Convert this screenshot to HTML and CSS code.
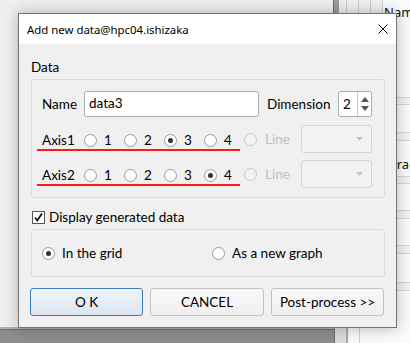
FILE: index.html
```html
<!DOCTYPE html>
<html>
<head>
<meta charset="utf-8">
<link rel="stylesheet" href="styles.css">
</head>
<body>
<div class="app-main">
  <div class="app-bar"></div>
  <div class="app-cols"><span></span><span></span><span></span></div>
</div>
<div class="app-table">
  <div class="tcell thead">Name</div>
  <div class="tcell band"></div>
  <div class="tcell r28"></div>
  <div class="tcell band b8"></div>
  <div class="tcell r36">Fraction</div>
  <div class="tcell band"></div>
  <div class="tcell r27"></div>
  <div class="tcell band b8"></div>
  <div class="tcell r27"></div>
  <div class="tcell band b8"></div>
  <div class="tcell r29"></div>
  <div class="tcell band b8"></div>
</div>
<div class="app-bottom">
  <div class="ab-gray"></div>
  <div class="ab-gap"></div>
  <div class="ab-white"></div>
</div>

<div class="dialog">
  <div class="titlebar">
    <span class="title">Add new data@hpc04.ishizaka</span>
    <svg class="close" width="10" height="10" viewBox="0 0 10 10"><path d="M0.5 0.5 L9.5 9.5 M9.5 0.5 L0.5 9.5" stroke="#000" stroke-width="1" fill="none"/></svg>
  </div>
  <div class="body">
    <div class="section-label">Data</div>
    <div class="group group-data">
      <div class="row row-name">
        <span class="lbl lbl-name">Name</span>
        <div class="input">data3</div>
        <span class="lbl lbl-dim">Dimension</span>
        <div class="spin">
          <span class="spin-val">2</span>
          <div class="spin-btns">
            <svg width="8" height="5" viewBox="0 0 8 5"><path d="M0 5 L4 0 L8 5 Z" fill="#555"/></svg>
            <svg width="8" height="5" viewBox="0 0 8 5"><path d="M0 0 L4 5 L8 0 Z" fill="#555"/></svg>
          </div>
        </div>
      </div>
      <div class="row row-axis">
        <div class="axis-mark">
          <span class="lbl lbl-axis">Axis1</span>
          <span class="radio"><span class="circle"></span>1</span>
          <span class="radio"><span class="circle"></span>2</span>
          <span class="radio"><span class="circle on"></span>3</span>
          <span class="radio"><span class="circle"></span>4</span>
        </div>
        <span class="radio radio-line disabled"><span class="circle"></span>Line</span>
        <div class="combo"><svg width="7" height="4" viewBox="0 0 7 4"><path d="M0 0 L3.5 4 L7 0 Z" fill="#c4c4c4"/></svg></div>
      </div>
      <div class="row row-axis">
        <div class="axis-mark">
          <span class="lbl lbl-axis">Axis2</span>
          <span class="radio"><span class="circle"></span>1</span>
          <span class="radio"><span class="circle"></span>2</span>
          <span class="radio"><span class="circle"></span>3</span>
          <span class="radio"><span class="circle on"></span>4</span>
        </div>
        <span class="radio radio-line disabled"><span class="circle"></span>Line</span>
        <div class="combo"><svg width="7" height="4" viewBox="0 0 7 4"><path d="M0 0 L3.5 4 L7 0 Z" fill="#c4c4c4"/></svg></div>
      </div>
    </div>
    <div class="check-row">
      <span class="check"><svg width="11" height="11" viewBox="0 0 11 11"><path d="M2 5.5 L4.3 8.5 L9 1.5" stroke="#111" stroke-width="1.8" fill="none"/></svg></span>
      <span>Display generated data</span>
    </div>
    <div class="group group-show">
      <span class="radio radio-grid"><span class="circle on"></span>In the grid</span>
      <span class="radio"><span class="circle"></span>As a new graph</span>
    </div>
    <div class="buttons">
      <div class="btn btn-default">O K</div>
      <div class="btn btn-cancel">CANCEL</div>
      <div class="btn">Post-process &gt;&gt;</div>
    </div>
  </div>
</div>
</body>
</html>
```

FILE: styles.css
```css
html, body {
  margin: 0;
  padding: 0;
}
body {
  width: 410px;
  height: 343px;
  overflow: hidden;
  position: relative;
  background: #efefef;
  font-family: "Lato", "Liberation Sans", sans-serif;
  font-size: 13.5px;
  color: #000;
}

/* underlying application (desktop canvas) */
.app-main {
  position: absolute;
  left: 333px;
  top: 0;
  width: 50px;
  height: 13px;
  display: flex;
  background: #f0f0f0;
}
.app-bar {
  width: 5px;
  background: #9c9c9c;
  border-left: 1px solid #6e6e6e;
}
.app-cols {
  display: flex;
  margin-left: 7px;
}
.app-cols span {
  width: 11px;
  border-left: 1px solid #c9c9c9;
}
.app-table {
  position: absolute;
  left: 382px;
  top: 0;
  width: 28px;
  height: 327px;
  background: #fbfbfb;
  border-left: 1px solid #cfcfcf;
  display: flex;
  flex-direction: column;
  overflow: hidden;
}
.tcell {
  flex-shrink: 0;
  border-bottom: 1px solid #d6d6d6;
  padding-left: 7px;
  white-space: nowrap;
  overflow: hidden;
  font-family: "Noto Sans", sans-serif;
  font-size: 13px;
  color: #111;
  box-sizing: border-box;
}
.thead {
  height: 98px;
  padding-left: 1px;
  line-height: 24px;
}
.band { height: 7px; background: #f3f3f3; }
.b8 { height: 8px; }
.r28 { height: 28px; }
.r36 { height: 36px; padding-top: 14px; line-height: 18px; }
.r27 { height: 27px; }
.r29 { height: 29px; }
.app-bottom {
  position: absolute;
  left: 0;
  top: 327px;
  width: 410px;
  height: 16px;
  display: flex;
}
.ab-gray {
  width: 334px;
  background: #8d8d8d;
  border-top: 2px solid #b0b0b0;
  border-right: 1px solid #6a6a6a;
  box-shadow: inset 0 1px 0 #707070;
}
.ab-gap {
  width: 11px;
  background: #dcdcdc;
  border-right: 2px solid #a9a9a9;
}
.ab-white {
  flex: 1;
  background: #fafafa;
  border-left: 1px solid #f0f0f0;
  background-image: linear-gradient(#cfcfcf, #cfcfcf);
  background-size: 1px 100%;
  background-position: 10px 0;
  background-repeat: no-repeat;
}

/* dialog window */
.dialog {
  position: absolute;
  left: 18px;
  top: 13px;
  width: 377px;
  height: 313px;
  border: 1px solid #737373;
  background: #f0f0f0;
  box-shadow: 0 0 14px rgba(0, 0, 0, 0.28);
  display: flex;
  flex-direction: column;
}
.titlebar {
  height: 30px;
  background: #ffffff;
  display: flex;
  align-items: center;
  justify-content: space-between;
  padding: 0 8px 0 8px;
  flex-shrink: 0;
}
.title {
  font-family: "Noto Sans", sans-serif;
  font-size: 11.4px;
  color: #000;
  padding-top: 1px;
}
.close {
  display: block;
  margin-top: -1px;
}
.body {
  flex: 1;
  padding: 14px 11px 0 11px;
  display: flex;
  flex-direction: column;
}
.section-label {
  height: 18px;
  line-height: 18px;
  margin-left: 1px;
  margin-bottom: 3px;
}
.group {
  margin-left: 1px;
  border: 1px solid #dadada;
  border-radius: 3px;
}
.group-data {
  padding: 11px 12px 9px 10px;
  display: flex;
  flex-direction: column;
  gap: 7px;
}
.row {
  display: flex;
  align-items: center;
}
.row-name {
  height: 26px;
  margin-bottom: 1px;
}
.row-axis {
  height: 28px;
}
.lbl {
  line-height: 18px;
}
.lbl-name {
  width: 42px;
}
.input {
  width: 175px;
  height: 26px;
  box-sizing: border-box;
  background: #fff;
  border: 1px solid #adadad;
  border-radius: 3px;
  padding-left: 4px;
  line-height: 23px;
}
.lbl-dim {
  margin-left: 8px;
  width: 71px;
}
.spin {
  width: 34px;
  height: 26px;
  box-sizing: border-box;
  background: #fff;
  border: 1px solid #adadad;
  border-radius: 3px;
  display: flex;
}
.spin-val {
  width: 19px;
  padding-left: 4px;
  box-sizing: border-box;
  line-height: 24px;
  border-right: 1px solid #c8c8c8;
}
.spin-btns {
  flex: 1;
  display: flex;
  flex-direction: column;
  justify-content: space-between;
  align-items: center;
  padding: 5px 0 5px 0;
}
.spin-btns svg { display: block; }

.axis-mark {
  display: flex;
  align-items: center;
  height: 20px;
  margin-left: -5px;
  padding-left: 5px;
  position: relative;
  margin-top: 2px;
}
.axis-mark::after {
  content: "";
  position: absolute;
  left: 0;
  right: 4px;
  bottom: -1px;
  height: 2px;
  background: #ff1a1a;
}
.lbl-axis {
  width: 42px;
}
.radio {
  display: flex;
  align-items: center;
  gap: 7px;
  width: 40px;
  line-height: 18px;
}
.circle {
  width: 13px;
  height: 13px;
  box-sizing: border-box;
  border: 1px solid #9a9a9a;
  border-radius: 50%;
  background: #fff;
  position: relative;
  flex-shrink: 0;
}
.circle.on::after {
  content: "";
  position: absolute;
  left: 3px;
  top: 3px;
  width: 5px;
  height: 5px;
  border-radius: 50%;
  background: #333;
}
.radio-line {
  width: 57px;
  gap: 8px;
}
.disabled { color: #c0c0c0; }
.disabled .circle {
  border-color: #c6c6c6;
  background: #f3f3f3;
}
.combo {
  width: 71px;
  height: 28px;
  box-sizing: border-box;
  border: 1px solid #d4d4d4;
  border-radius: 3px;
  background: #f2f2f2;
  display: flex;
  align-items: center;
  justify-content: flex-end;
  padding-right: 8px;
}
.combo svg { display: block; }

.check-row {
  height: 18px;
  margin-top: 10px;
  margin-bottom: 3px;
  display: flex;
  align-items: center;
  gap: 4px;
  padding-left: 2px;
}
.check {
  width: 13px;
  height: 13px;
  box-sizing: border-box;
  border: 1px solid #555;
  background: #fff;
  display: flex;
  align-items: center;
  justify-content: center;
}
.check svg { display: block; }
.group-show {
  height: 46px;
  display: flex;
  align-items: center;
  padding-left: 10px;
}
.group-show .radio {
  width: auto;
}
.radio-grid {
  width: 170px !important;
}
.buttons {
  margin-top: 11px;
  display: flex;
  gap: 7px;
}
.btn {
  width: 113px;
  height: 28px;
  box-sizing: border-box;
  border: 1px solid #c2c2c2;
  border-radius: 3px;
  background: linear-gradient(#f8f8f8, #efefef);
  display: flex;
  align-items: center;
  justify-content: center;
}
.btn-cancel { width: 114px; }
.btn-default {
  border-color: #3b7db5;
  background: linear-gradient(#eef4f9, #dde6ee);
}
```
